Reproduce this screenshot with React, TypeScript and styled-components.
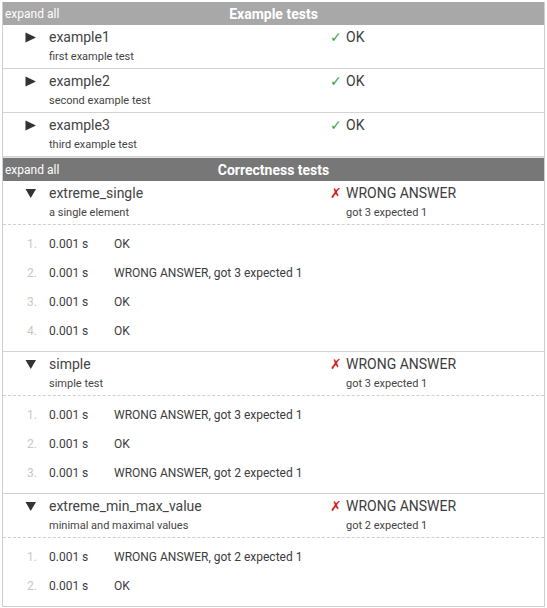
import React from "react";
import styled, { createGlobalStyle } from "styled-components";

const Global = createGlobalStyle`
  html, body { margin: 0; padding: 0; background: #fff; }
  body { font-family: Roboto, "Liberation Sans", Arial, sans-serif; color: #444; }
`;

const Page = styled.div`
  padding: 2px;
`;

const Panel = styled.div`
  border: 1px solid #cfcfcf;
  border-top: none;
`;

const SectionHeader = styled.div<{ $dark?: boolean }>`
  display: grid;
  grid-template-columns: 1fr auto 1fr;
  align-items: center;
  height: 23px;
  background: ${(p) => (p.$dark ? "#777777" : "#a8a8a8")};
  border-top: ${(p) => (p.$dark ? "1px solid #e2e2e2" : "none")};
  color: #fff;
`;

const ExpandAll = styled.span`
  font-size: 12px;
  padding-left: 2px;
  cursor: pointer;
  justify-self: start;
`;

const SectionTitle = styled.span`
  font-size: 14px;
  font-weight: 700;
`;

const Group = styled.div<{ $last?: boolean }>`
  border-bottom: ${(p) => (p.$last ? "none" : "1px solid #d3d3d3")};
`;

const TestRow = styled.div`
  display: grid;
  grid-template-columns: 24px 281px 1fr;
  padding: 3px 0 4px 22px;
`;

const Toggle = styled.span`
  display: flex;
  align-items: flex-start;
  padding-top: 4px;
  color: #333;
`;

const NameCell = styled.div`
  display: flex;
  flex-direction: column;
`;

const Title = styled.span`
  font-size: 14px;
  line-height: 18px;
  color: #444;
`;

const Sub = styled.span`
  font-size: 11px;
  line-height: 14px;
  margin-top: 4px;
  color: #444;
`;

const StatusCell = styled.div`
  display: grid;
  grid-template-columns: 16px 1fr;
`;

const Mark = styled.span<{ $ok?: boolean }>`
  font-family: "DejaVu Sans", sans-serif;
  font-size: 14px;
  line-height: 18px;
  color: ${(p) => (p.$ok ? "#3aa34a" : "#cc1f1f")};
`;

const StatusText = styled.span`
  font-size: 14px;
  line-height: 18px;
  color: #3c3c3c;
`;

const StatusSub = styled.span`
  grid-column: 2;
  font-size: 11px;
  line-height: 14px;
  margin-top: 4px;
  color: #444;
`;

const SubtestList = styled.div`
  border-top: 1px dashed #cfcfcf;
  padding: 5px 0 5px;
`;

const SubtestRow = styled.div`
  display: grid;
  grid-template-columns: 46px 65px 1fr;
  font-size: 12px;
  line-height: 29px;
  color: #3c3c3c;
`;

const SubNum = styled.span`
  text-align: right;
  padding-right: 12px;
  color: #c8c8c8;
`;

const Arrow = ({ open }: { open: boolean }) =>
  open ? (
    <svg width="12" height="11" viewBox="0 0 12 11">
      <polygon points="0.5,1 11,1 5.75,10" fill="#333" />
    </svg>
  ) : (
    <svg width="12" height="11" viewBox="0 0 12 11">
      <polygon points="0.5,0.5 11,5.5 0.5,10.5" fill="#333" />
    </svg>
  );

type SubT = { time: string; result: string };
type Test = {
  name: string;
  desc: string;
  ok: boolean;
  detail?: string;
  subs?: SubT[];
};

const examples: Test[] = [
  { name: "example1", desc: "first example test", ok: true },
  { name: "example2", desc: "second example test", ok: true },
  { name: "example3", desc: "third example test", ok: true },
];

const correctness: Test[] = [
  {
    name: "extreme_single",
    desc: "a single element",
    ok: false,
    detail: "got 3 expected 1",
    subs: [
      { time: "0.001 s", result: "OK" },
      { time: "0.001 s", result: "WRONG ANSWER, got 3 expected 1" },
      { time: "0.001 s", result: "OK" },
      { time: "0.001 s", result: "OK" },
    ],
  },
  {
    name: "simple",
    desc: "simple test",
    ok: false,
    detail: "got 3 expected 1",
    subs: [
      { time: "0.001 s", result: "WRONG ANSWER, got 3 expected 1" },
      { time: "0.001 s", result: "OK" },
      { time: "0.001 s", result: "WRONG ANSWER, got 2 expected 1" },
    ],
  },
  {
    name: "extreme_min_max_value",
    desc: "minimal and maximal values",
    ok: false,
    detail: "got 2 expected 1",
    subs: [
      { time: "0.001 s", result: "WRONG ANSWER, got 2 expected 1" },
      { time: "0.001 s", result: "OK" },
    ],
  },
];

const TestGroup = ({ t, last }: { t: Test; last?: boolean }) => (
  <Group $last={last}>
    <TestRow>
      <Toggle>
        <Arrow open={!!t.subs} />
      </Toggle>
      <NameCell>
        <Title>{t.name}</Title>
        <Sub>{t.desc}</Sub>
      </NameCell>
      <StatusCell>
        <Mark $ok={t.ok}>{t.ok ? "✓" : "✗"}</Mark>
        <StatusText>{t.ok ? "OK" : "WRONG ANSWER"}</StatusText>
        {t.detail && <StatusSub>{t.detail}</StatusSub>}
      </StatusCell>
    </TestRow>
    {t.subs && (
      <SubtestList>
        {t.subs.map((s, i) => (
          <SubtestRow key={i}>
            <SubNum>{i + 1}.</SubNum>
            <span>{s.time}</span>
            <span>{s.result}</span>
          </SubtestRow>
        ))}
      </SubtestList>
    )}
  </Group>
);

export default function App() {
  return (
    <Page>
      <Global />
      <Panel>
        <SectionHeader>
          <ExpandAll>expand all</ExpandAll>
          <SectionTitle>Example tests</SectionTitle>
        </SectionHeader>
        {examples.map((t) => (
          <TestGroup key={t.name} t={t} />
        ))}
        <SectionHeader $dark>
          <ExpandAll>expand all</ExpandAll>
          <SectionTitle>Correctness tests</SectionTitle>
        </SectionHeader>
        {correctness.map((t, i) => (
          <TestGroup key={t.name} t={t} last={i === correctness.length - 1} />
        ))}
      </Panel>
    </Page>
  );
}
